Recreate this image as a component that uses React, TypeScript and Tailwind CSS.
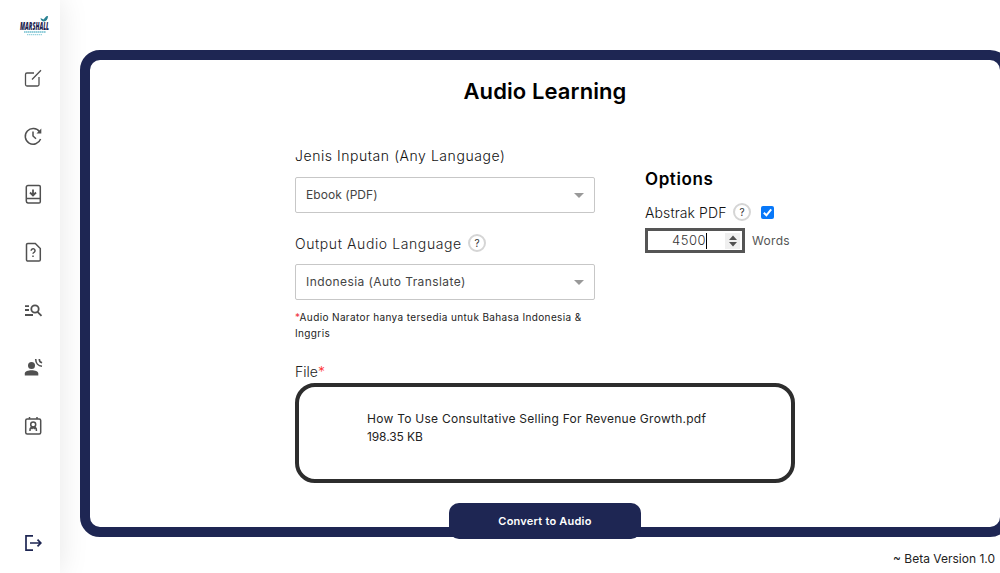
import type { ReactNode } from 'react';

function Icon({ children, color = 'text-[#505050]' }: { children: ReactNode; color?: string }) {
  return (
    <svg viewBox="0 0 24 24" className={`size-6 shrink-0 ${color}`} fill="none" stroke="currentColor" strokeWidth="1.5">
      {children}
    </svg>
  );
}

function Logo() {
  return (
    <svg viewBox="0 0 34 22" className="h-[22px] w-[34px] shrink-0 overflow-visible">
      <path d="M22.500 3l3 1.500 2.800-3.200 1.800-.3c-.3 3.500-1.800 5.400-4 5.400-2.200 0-3.300-1.100-3.600-3.400z" fill="#2a8293" />
      <text x="2" y="14.500" textLength="29" lengthAdjust="spacingAndGlyphs" className="font-['Open_Sans',sans-serif] text-[10.500px] font-extrabold italic" fill="#1c2450">
        MARSHALL
      </text>
      <path d="M6 17h22" stroke="#70bfce" strokeWidth="1.400" strokeDasharray="1.600 .4" />
      <path d="M9 19.700h15" stroke="#95d2dd" strokeWidth="1.200" strokeDasharray="1.400 .6" />
    </svg>
  );
}

function Sidebar() {
  return (
    <aside className="flex h-[573px] w-[60px] shrink-0 flex-col items-center bg-white pt-[15px] pb-[18px] pl-[6px] shadow-[0_0_30px_rgba(0,0,0,0.1)]">
      <div className="flex pl-1"><Logo /></div>
      <nav className="mt-[29px] flex flex-col gap-[34px]">
        <Icon>
          <path d="M13 7H6a1.500 1.500 0 0 0-1.500 1.500v10A1.500 1.500 0 0 0 6 20h10.500a1.500 1.500 0 0 0 1.500-1.500V11M11 13.500l9-9.300" strokeWidth="1.300" />
        </Icon>
        <Icon>
          <path d="M18.600 7.700A7.900 7.900 0 1 0 19.600 15M12 7.500V12l3 2.800" />
          <path d="M20.300 4.500v5h-4.800z" fill="currentColor" stroke="none" />
        </Icon>
        <Icon>
          <path d="M7 3.500h11a1.300 1.300 0 0 1 1.300 1.300v14.900a1.300 1.300 0 0 1-1.300 1.300H7a2 2 0 0 1-1.700-2V5.200A1.700 1.700 0 0 1 7 3.500zM5.500 16.500h13.800" />
          <path d="M12 7.500v6M9 10.500l3 3 3-3" strokeWidth="1.800" />
        </Icon>
        <Icon>
          <path d="M6.800 3.500h7.500l5 5v11.200a1.300 1.300 0 0 1-1.300 1.300H6.800a1.300 1.300 0 0 1-1.300-1.300V4.800a1.300 1.300 0 0 1 1.300-1.300z" />
          <path d="M10.200 10.800a1.900 1.900 0 1 1 3.100 1.300c-.8.600-1.300.9-1.300 1.700M12 15.500V17" />
        </Icon>
        <Icon>
          <path d="M4 8.200h4M4 12h4M4 17h8M16.500 13.800l4 4" strokeWidth="1.800" />
          <circle cx="14" cy="11" r="3.700" strokeWidth="1.800" />
        </Icon>
        <Icon>
          <circle cx="10.500" cy="9.500" r="3.500" fill="currentColor" stroke="none" />
          <path d="M3.800 19.500v-2c0-2 3.500-3.200 6.800-3.200s6.700 1.200 6.700 3.200v2z" fill="currentColor" stroke="none" />
          <path d="M14.700 3c0 4 2.500 7 6.300 7.300M18.300 3c0 2 1 3.500 2.800 3.800" strokeWidth="1.600" />
        </Icon>
        <Icon>
          <rect x="4.700" y="5" width="15" height="15" rx="1.500" />
          <path d="M8.500 3v2M16 3v2" />
          <circle cx="12.200" cy="10.500" r="2.500" />
          <path d="M9 17v-1.200c0-1.500 1.200-2.500 3.200-2.500s3.200 1 3.200 2.500V17M10.500 15l1.700-1.500 1.700 1.500" />
        </Icon>
      </nav>
      <div className="mt-auto">
        <Icon color="text-[#1e2653]">
          <path d="M12 4.800H5v14.400h7M9 12h11M16.500 8.700l3.300 3.300-3.300 3.300" strokeWidth="1.700" />
        </Icon>
      </div>
    </aside>
  );
}

function Help() {
  return (
    <span className="flex size-[18px] shrink-0 items-center justify-center rounded-full border-2 border-[#d5d5d5] text-[10px] text-[#333]">
      ?
    </span>
  );
}

function SelectBox({ children }: { children: ReactNode }) {
  return (
    <div className="flex h-9 w-[300px] items-center justify-between rounded-[2px] border border-[#c7c7c7] px-[10px] text-[12px] text-[#444]">
      {children}
      <svg viewBox="0 0 10 5" className="h-[5px] w-[10px]"><path d="M0 0h10L5 5z" fill="#999" /></svg>
    </div>
  );
}

function Options() {
  return (
    <section className="mt-[23px] w-[160px]">
      <h2 className="h-6 text-[17px] leading-6 font-semibold tracking-[0.6px] text-black">Options</h2>
      <div className="mt-[10px] flex h-[22px] items-center text-[14px] text-[#111]">
        <span className="w-[88px] font-light tracking-[0.1px]">Abstrak PDF</span>
        <Help />
        <span className="ml-[10px] flex size-[13px] items-center justify-center rounded-[2px] bg-[#0878f9]">
          <svg viewBox="0 0 13 13" className="size-[13px]" fill="none"><path d="M2.800 6.800l2.600 2.500 4.800-6" stroke="white" strokeWidth="2" /></svg>
        </span>
      </div>
      <div className="mt-[5px] flex h-[25px] items-center">
        <div className="flex h-[25px] w-[100px] items-center justify-end border-3 border-[#555] pr-[2px]">
          <span className="text-[13px] font-light tracking-[0.5px] text-[#333]">4500</span>
          <span className="h-4 w-px bg-black" />
          <span className="ml-[18px] flex h-4 w-[15px] items-center justify-center bg-[#efefef]">
            <svg viewBox="0 0 8 12" className="h-3 w-2" fill="#505050"><path d="M0 5l4-4.500L8 5zM0 7h8l-4 4.500z" /></svg>
          </span>
        </div>
        <span className="ml-[7px] text-[12px] tracking-[0.3px] text-[#555]">Words</span>
      </div>
    </section>
  );
}

export default function App() {
  return (
    <div className="flex h-[573px] w-full overflow-hidden bg-white font-['Inter','Open_Sans',sans-serif]">
      <Sidebar />
      <main className="z-10 flex min-w-0 grow flex-col pt-[50px] pl-5">
        <div className="h-[487px] w-[930px] shrink-0 rounded-[20px] border-10 border-[#1e2653] bg-white">
          <h1 className="mt-[15px] h-8 text-center text-[22px] leading-8 font-semibold tracking-[0.1px] text-black">Audio Learning</h1>
          <div className="mx-auto flex w-[500px] justify-between pt-[37px]">
            <section className="w-[300px]">
              <div className="h-6 text-[14px] leading-6 font-light tracking-[0.550px] text-[#111]">Jenis Inputan (Any Language)</div>
              <div className="mt-[9px]">
                <SelectBox><span className="tracking-[0.050px]">Ebook (PDF)</span></SelectBox>
              </div>
              <div className="mt-[18px] flex h-6 items-center text-[14px] text-[#222]">
                <span className="w-[173px] font-light tracking-[0.600px] whitespace-nowrap">Output Audio Language</span>
                <Help />
              </div>
              <div className="mt-[9px]">
                <SelectBox><span className="tracking-[0.420px]">Indonesia (Auto Translate)</span></SelectBox>
              </div>
              <p className="mt-[9px] h-8 text-[10px] leading-4 tracking-[0.370px] text-[#222]">
                <span className="text-[#ef3340]">*</span>Audio Narator hanya tersedia untuk Bahasa Indonesia &amp;<br />Inggris
              </p>
            </section>
            <div className="mr-[-10px] flex"><Options /></div>
          </div>
          <div className="mx-auto w-[500px] pt-[19px]">
            <div className="h-[23px] text-[14px] leading-6 font-light text-[#222]">File<span className="text-[#f33]">*</span></div>
            <div className="h-[100px] rounded-[20px] border-4 border-[#2d2d2d] pt-[23px] pl-[68px] text-[12px] leading-[18px] text-[#222]">
              <div className="tracking-[0.260px]">How To Use Consultative Selling For Revenue Growth.pdf</div>
              <div className="tracking-[-0.1px]">198.35 KB</div>
            </div>
          </div>
          <button className="relative mx-auto mt-5 block h-9 w-48 rounded-[10px] bg-[#1e2653] text-[11px] font-semibold tracking-[0.220px] text-white">
            Convert to Audio
          </button>
        </div>
        <footer className="mt-[12px] pr-[5px] text-right text-[12px] leading-5 text-[#222]">~ Beta Version 1.0</footer>
      </main>
    </div>
  );
}
